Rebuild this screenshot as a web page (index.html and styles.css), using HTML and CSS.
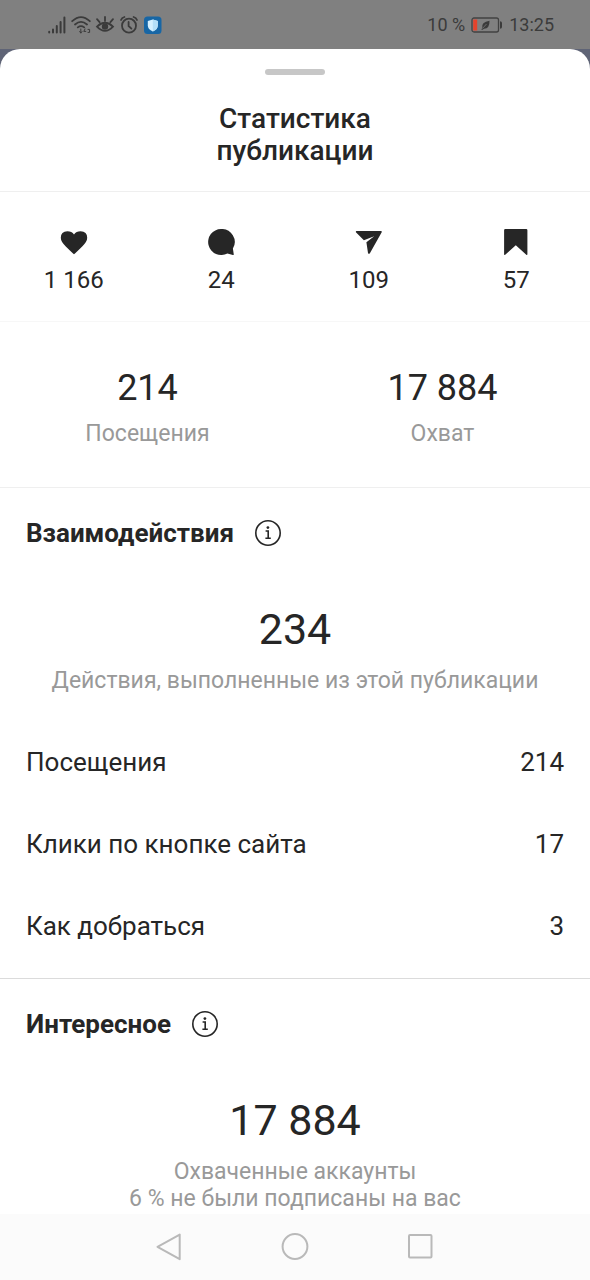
FILE: index.html
```html
<!DOCTYPE html>
<html lang="ru">
<head>
<meta charset="utf-8">
<meta name="viewport" content="width=device-width, initial-scale=1">
<title>Статистика публикации</title>
<link rel="stylesheet" href="styles.css">
</head>
<body>
<header class="status">
  <div class="status-icons">
    <svg width="20" height="20" viewBox="0 0 20 20" fill="none" stroke="#3b3b3b" stroke-width="2" stroke-linecap="round"><path d="M2.200 16.800v.6M6 14.600v2.800M9.800 11v6.400M13.600 7v10.400M17.400 2.400v15"/></svg>
    <svg width="20" height="20" viewBox="0 0 20 20" fill="none" stroke="#3b3b3b" stroke-width="1.800" stroke-linecap="round"><path d="M1.200 6.200Q10-2 18.800 6.200M4 9.500Q10 4.200 16 9.500M6.800 12.400Q10 10 13.200 12.400"/><path d="M9.800 14v4M8.600 16.600l1.200 1.400 1.200-1.400M14 14l-1.200 2.400h2M17 14.400h1.600v3H17" stroke-width="1"/></svg>
    <svg width="20" height="20" viewBox="0 0 20 20" fill="none" stroke="#3b3b3b" stroke-width="1.800" stroke-linecap="round"><path d="M2 11.600Q10 3.800 18 11.600 10 20 2 11.600zM10 6V2M4.600 7.200 2 4.200M15.400 7.200 18 4.200"/><circle cx="10" cy="11.600" r="2.300" fill="#3b3b3b"/></svg>
    <svg width="20" height="20" viewBox="0 0 20 20" fill="none" stroke="#3b3b3b" stroke-width="1.800" stroke-linecap="round"><circle cx="10" cy="10.700" r="7"/><path d="M9.600 7v4l2.800 2.600M2 5Q2.800 2.800 5.400 2M14.600 2Q17.200 2.800 18 5"/></svg>
    <svg width="20" height="20" viewBox="0 0 20 20"><rect x="1" y="1.600" width="17.500" height="17.500" rx="3.500" fill="#1766a5"/><path d="M9.800 4.600 14.800 6v4.500q0 4-5 5.900-5-1.900-5-5.900V6z" fill="#d5f0ff"/><path d="M9.800 4.600 14.800 6v4.500q0 4-5 5.900z" fill="#b4dff8"/></svg>
  </div>
  <div class="status-info">
    <span>10 %</span>
    <svg width="32" height="18" viewBox="0 0 32 18"><rect x="1" y="2" width="26.500" height="14" rx="2" fill="none" stroke="#414141" stroke-width="1.300"/><path d="M2.200 3.500h4v11h-4z" fill="#e5432c"/><path d="M29 5.200q2 0 2 1.800v4q0 1.800-2 1.800z" fill="#3b3b3b"/><path d="M18.500 4.800Q18.800 12.600 13 12.800l-2 1.200-.6-.5.900-1.500Q10 6 18.500 4.800z" fill="#3b3b3b"/><path d="m11.500 12.500 4-4.500" stroke="#808080" stroke-width=".7"/></svg>
    <time>13:25</time>
  </div>
</header>

<div class="backdrop">
<main class="sheet">
  <div class="handle"></div>
  <h1 class="title">Статистика<br>публикации</h1>

  <section class="counters">
    <div class="counter">
      <svg width="28" height="26" viewBox="0 0 28 26" fill="#262626"><path d="M14 25.200Q12.800 24.300 5.800 17.400.8 12.800.8 8.800.8 2.300 7.400 2.200q4.400 0 6.600 3.300 2.200-3.300 6.600-3.300 6.600.1 6.600 6.600 0 4-5 8.600-7 6.900-8.200 7.800z"/></svg>
      <span>1 166</span>
    </div>
    <div class="counter">
      <svg width="28" height="26" viewBox="0 0 28 26" fill="#262626"><path d="M14 0a13 13 0 1 0 6.400 24.400l5.500 1.500q1 .2.800-.8l-.8-5.500A13 13 0 0 0 14 0z"/></svg>
      <span>24</span>
    </div>
    <div class="counter">
      <svg width="28" height="26" viewBox="0 0 28 26" fill="#262626"><path d="M1.400 1.900H26q1.400.1.700 1.400L14.900 24.200q-1.300 1.400-1.900-.3l-1.600-10.600L19.200 7.200 8.900 11.200.9 3.200q-.4-1 .5-1.300z"/></svg>
      <span>109</span>
    </div>
    <div class="counter">
      <svg width="28" height="26" viewBox="0 0 28 26" fill="#262626"><path d="M3.300 0h20.900q1.200 0 1.200 1.200v24q-.1 1.200-1.100.5L13.800 16.300 3.200 25.700q-1 .7-1.100-.5v-24Q2.100 0 3.300 0z"/></svg>
      <span>57</span>
    </div>
  </section>

  <section class="totals">
    <div class="total"><strong>214</strong><span>Посещения</span></div>
    <div class="total"><strong>17 884</strong><span>Охват</span></div>
  </section>

  <section class="group">
    <div class="group-head">
      <h2>Взаимодействия</h2>
      <button class="info" type="button" aria-label="О взаимодействиях"><svg width="28" height="28" viewBox="0 0 28 28" fill="none" stroke="#262626" stroke-width="1.600"><circle cx="14" cy="14" r="12.200"/><path d="M11.600 12h2.600v7.200M11.400 19.200h5.400"/><circle cx="13.900" cy="8.600" r="1.400" fill="#262626" stroke="none"/></svg></button>
    </div>
    <p class="big">234</p>
    <p class="note">Действия, выполненные из этой публикации</p>
    <dl class="rows">
      <div class="row"><dt>Посещения</dt><dd>214</dd></div>
      <div class="row"><dt>Клики по кнопке сайта</dt><dd>17</dd></div>
      <div class="row"><dt>Как добраться</dt><dd>3</dd></div>
    </dl>
  </section>

  <section class="group">
    <div class="group-head">
      <h2>Интересное</h2>
      <button class="info" type="button" aria-label="Об интересном"><svg width="28" height="28" viewBox="0 0 28 28" fill="none" stroke="#262626" stroke-width="1.600"><circle cx="14" cy="14" r="12.200"/><path d="M11.600 12h2.600v7.200M11.400 19.200h5.400"/><circle cx="13.900" cy="8.600" r="1.400" fill="#262626" stroke="none"/></svg></button>
    </div>
    <p class="big">17 884</p>
    <p class="note">Охваченные аккаунты<br>6 % не были подписаны на вас</p>
  </section>
</main>
</div>

<nav class="navbar">
  <button type="button" aria-label="Назад"><svg width="28" height="28" viewBox="0 0 28 28"><path d="M24.700 1.600v24.600L2.500 13.800z"/></svg></button>
  <button type="button" aria-label="Домой"><svg width="28" height="28" viewBox="0 0 28 28"><circle cx="14" cy="13.500" r="12.400"/></svg></button>
  <button type="button" aria-label="Недавние"><svg width="28" height="28" viewBox="0 0 28 28"><rect x="2" y="2" width="22.500" height="22.500" rx="1"/></svg></button>
</nav>
</body>
</html>
```
FILE: styles.css
```css
* {
  box-sizing: border-box;
}

body {
  margin: 0;
  min-height: 100vh;
  display: flex;
  flex-direction: column;
  background: #fff;
  color: #262626;
  font-family: Roboto, "Noto Sans", sans-serif;
}

h1, h2, p, dl, dd {
  margin: 0;
}

button {
  padding: 0;
  border: 0;
  background: none;
}

svg {
  display: block;
}

.status {
  display: flex;
  justify-content: space-between;
  align-items: center;
  height: 49px;
  padding: 0 36px 0 47px;
  background: #808080;
  color: #3b3b3b;
  font-size: 18px;
}

.status-icons {
  display: flex;
  gap: 4px;
}

.status-info {
  display: flex;
  align-items: center;
  gap: 6px;
}

.backdrop {
  flex: 1;
  background: linear-gradient(#5f6476 24px, #fff 24px);
}

.sheet {
  padding-top: 20px;
  border-radius: 20px 20px 0 0;
  background: #fff;
}

.handle {
  width: 60px;
  height: 6px;
  margin: 0 auto 28px;
  border-radius: 3px;
  background: #c7c7c7;
}

.title {
  padding-bottom: 24px;
  border-bottom: 1px solid #efefef;
  font-size: 28px;
  font-weight: 500;
  line-height: 32px;
  text-align: center;
}

.counters {
  display: grid;
  grid-template-columns: repeat(4, 1fr);
  padding: 37px 0 27px;
  border-bottom: 1px solid #f7f7f7;
}

.counter {
  display: flex;
  flex-direction: column;
  align-items: center;
  gap: 11px;
  font-size: 24px;
  line-height: 28px;
}

.totals {
  display: grid;
  grid-template-columns: repeat(2, 1fr);
  padding: 45px 0 40px;
}

.total {
  display: flex;
  flex-direction: column;
  align-items: center;
  gap: 11px;
}

.total strong {
  font-size: 36px;
  font-weight: 400;
  line-height: 42px;
}

.total span,
.note {
  color: #999;
  font-size: 23px;
  line-height: 27px;
}

.group {
  padding: 29px 26px 11px;
  border-top: 1px solid #efefef;
}

.group + .group {
  padding-bottom: 1px;
  border-color: #dbdbdb;
}

.group-head {
  display: flex;
  align-items: center;
  gap: 20px;
}

.group-head h2 {
  font-size: 26px;
  font-weight: 700;
  line-height: 32px;
}

.big {
  margin-top: 55px;
  font-size: 43px;
  line-height: 50px;
  text-align: center;
}

.note {
  margin-top: 13px;
  text-align: center;
}

.rows {
  margin-top: 27px;
}

.row {
  display: flex;
  justify-content: space-between;
  align-items: center;
  height: 82px;
  font-size: 26px;
}

.navbar {
  display: flex;
  justify-content: center;
  align-items: center;
  gap: 98px;
  height: 66px;
  background: #fbfbfb;
}

.navbar svg {
  fill: none;
  stroke: #b9b9b9;
  stroke-width: 2;
  stroke-linejoin: round;
}
```
